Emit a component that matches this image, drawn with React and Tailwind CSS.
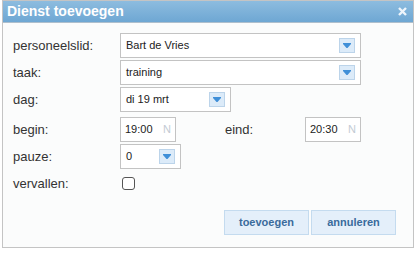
import React from 'react';

function Caret() {
  return (
    <span className="flex h-[15px] w-[16px] items-center justify-center border border-[#bcd4ea] bg-[#dcebf9]">
      <svg width="8" height="5" viewBox="0 0 8 5">
        <path d="M0 0h8v1L4.5 5h-1L0 1z" fill="#3f8fd8" />
      </svg>
    </span>
  );
}

function Select({ value, width }) {
  return (
    <div
      className={`flex h-[25px] items-center justify-between border border-[#c3c3c3] bg-white pl-[5px] pr-[5px] text-[11px] text-[#222] ${width}`}
    >
      <span>{value}</span>
      <Caret />
    </div>
  );
}

function TimeInput({ value }) {
  return (
    <div className="flex h-[25px] w-[56px] items-center justify-between border border-[#c3c3c3] bg-white pl-[4px] pr-[4px] text-[11px] text-[#222]">
      <span>{value}</span>
      <span className="text-[11px] text-[#c3cbd4]">N</span>
    </div>
  );
}

function Row({ label, children, className = '' }) {
  return (
    <div className={`flex items-center ${className}`}>
      <div className="w-[107px] text-[13px] text-[#333]">{label}</div>
      {children}
    </div>
  );
}

export default function App() {
  return (
    <div className="h-[253px] w-[419px] bg-white" style={{ fontFamily: '"Liberation Sans", Arial, sans-serif' }}>
      <div className="ml-[2px] flex h-[248px] w-[412px] flex-col border border-[#c4c4c4] bg-[#fbfcfc]">
        <div className="flex h-[22px] items-center justify-between border-b border-[#aebfcd] bg-gradient-to-b from-[#8dbcdf] to-[#6ea7d3] pl-[4px] pr-[6px]">
          <span className="text-[14px] font-bold text-white">Dienst toevoegen</span>
          <svg width="9" height="9" viewBox="0 0 9 9">
            <path d="M1 1l7 7M8 1L1 8" stroke="#eef5fb" strokeWidth="2.4" />
          </svg>
        </div>

        <div className="flex flex-col pl-[10px] pt-[10px]">
          <Row label="personeelslid:">
            <Select value="Bart de Vries" width="w-[241px]" />
          </Row>
          <Row label="taak:" className="mt-[2px]">
            <Select value="training" width="w-[241px]" />
          </Row>
          <Row label="dag:" className="mt-[2px]">
            <Select value="di 19 mrt" width="w-[111px]" />
          </Row>
          <Row label="begin:" className="mt-[5px]">
            <TimeInput value="19:00" />
            <span className="ml-[49px] w-[80px] text-[13px] text-[#333]">eind:</span>
            <TimeInput value="20:30" />
          </Row>
          <Row label="pauze:" className="mt-[2px]">
            <Select value="0" width="w-[61px]" />
          </Row>
          <Row label="vervallen:" className="mt-[5px]">
            <span className="ml-[2px] h-[13px] w-[13px] rounded-[3px] border border-[#555] bg-white" />
          </Row>
        </div>

        <div className="mt-auto flex justify-end gap-[2px] pb-[12px] pr-[17px]">
          <button className="h-[25px] w-[85px] border border-[#c4dbef] bg-[#e4effa] text-[11px] font-bold text-[#3a6b9c]">
            toevoegen
          </button>
          <button className="h-[25px] w-[85px] border border-[#c4dbef] bg-[#e4effa] text-[11px] font-bold text-[#3a6b9c]">
            annuleren
          </button>
        </div>
      </div>
    </div>
  );
}
